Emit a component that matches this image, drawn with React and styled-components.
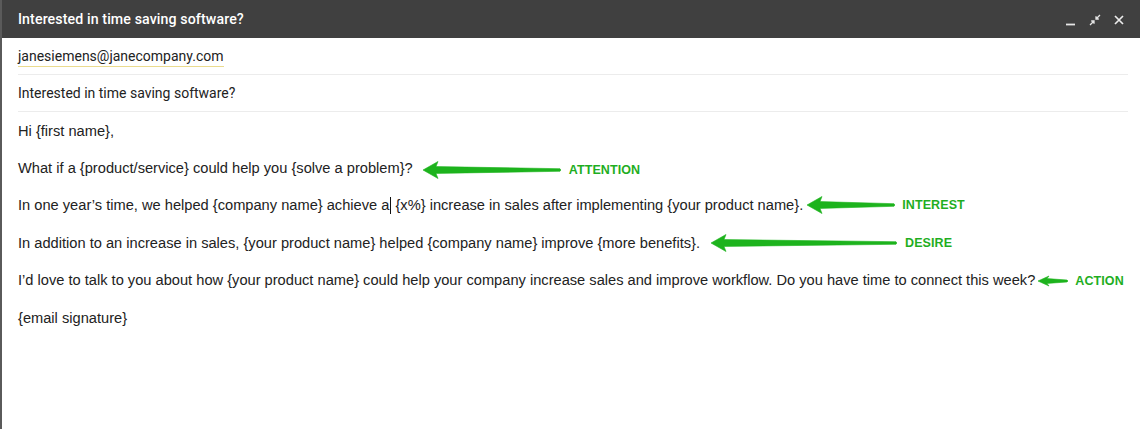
import React from "react";
import styled, { createGlobalStyle } from "styled-components";

const GlobalStyle = createGlobalStyle`
    html, body {
        margin: 0;
        padding: 0;
        background: #ffffff;
    }
    * {
        box-sizing: border-box;
    }
`;

const Window = styled.div`
    width: 1140px;
    height: 429px;
    display: flex;
    flex-direction: column;
    border-left: 2px solid #5a5a5a;
    background: #fff;
    overflow: hidden;
`;

const TitleBar = styled.div`
    height: 38px;
    background: #404040;
    display: flex;
    align-items: center;
    justify-content: space-between;
    margin-left: -2px;
    padding: 0 14px 0 18px;
`;

const TitleText = styled.div`
    color: #ffffff;
    font-family: Roboto, "Noto Sans", sans-serif;
    font-weight: 500;
    font-size: 14.2px;
    letter-spacing: 0.1px;
`;

const Controls = styled.div`
    display: flex;
    align-items: center;
    gap: 10px;
    margin-top: 2px;
`;

const ControlIcon = styled.svg`
    width: 14px;
    height: 14px;
    display: block;
`;

const Field = styled.div`
    margin: 0 12px 0 16px;
    height: 37px;
    display: flex;
    align-items: center;
    border-bottom: 1px solid #ececec;
    font-family: Roboto, "Noto Sans", sans-serif;
    font-size: 14px;
    color: #222;
`;

const Recipient = styled.span`
    border-bottom: 1px solid #eadb8e;
    line-height: 17px;
    padding-bottom: 1px;
    margin-top: 3px;
`;

const Body = styled.div`
    padding: 0 0 0 16px;
    display: flex;
    flex-direction: column;
    font-family: "Liberation Sans", Arial, sans-serif;
    font-size: 14.65px;
    color: #222;
`;

const Line = styled.div`
    height: 37.4px;
    display: flex;
    align-items: center;
    white-space: pre;
`;

const Cursor = styled.span`
    display: inline-block;
    width: 1px;
    height: 17px;
    background: #111;
    margin: 0 0 0 1px;
`;

const Annotation = styled.div`
    display: flex;
    align-items: center;
    margin-left: ${({ gap }) => gap}px;
    margin-top: ${({ shift }) => shift || 0}px;
`;

const Label = styled.span`
    color: #1fae1f;
    font-family: "Liberation Sans", Arial, sans-serif;
    font-weight: bold;
    font-size: 12.5px;
    margin-left: ${({ gap }) => gap}px;
    letter-spacing: 0.1px;
`;

const Arrow = ({ length }) => {
    const h = 18;
    const small = length < 50;
    const head = small ? 11 : 15;
    const half = small ? 5 : 8.5;
    const tail = small ? 2 : 2.6;
    const neck = small ? 2.4 : 3.4;
    const mid = h / 2;
    return (
        <svg width={length} height={h} viewBox={`0 0 ${length} ${h}`} style={{ display: "block" }}>
            <path
                d={`M0 ${mid} L${head} ${mid - half} L${head - 2} ${mid - neck} L${length - 1} ${mid - tail / 2} L${length} ${mid} L${length - 1} ${mid + tail / 2} L${head - 2} ${mid + neck} L${head} ${mid + half} Z`}
                fill="#1db31d"
                stroke="#1db31d"
                strokeWidth="0.6"
                strokeLinejoin="round"
            />
        </svg>
    );
};

const App = () => {
    return (
        <>
            <GlobalStyle />
            <Window>
                <TitleBar>
                    <TitleText>Interested in time saving software?</TitleText>
                    <Controls>
                        <ControlIcon viewBox="0 0 14 14">
                            <path d="M2 11.5 H11" stroke="#e6e6e6" strokeWidth="1.8" />
                        </ControlIcon>
                        <ControlIcon viewBox="0 0 14 14">
                            <path d="M12 2 L8 6 M8 3.2 V6 H10.8 M2 12 L6 8 M3.2 8 H6 V10.8" stroke="#e6e6e6" strokeWidth="1.3" fill="none" />
                        </ControlIcon>
                        <ControlIcon viewBox="0 0 14 14">
                            <path d="M3 3 L11 11 M11 3 L3 11" stroke="#ececec" strokeWidth="1.7" />
                        </ControlIcon>
                    </Controls>
                </TitleBar>
                <Field>
                    <Recipient>janesiemens@janecompany.com</Recipient>
                </Field>
                <Field>Interested in time saving software?</Field>
                <Body>
                    <Line>Hi {"{first name}"},</Line>
                    <Line>
                        {"What if a {product/service} could help you {solve a problem}?"}
                        <Annotation gap={10} shift={3}>
                            <Arrow length={138} />
                            <Label gap={8}>ATTENTION</Label>
                        </Annotation>
                    </Line>
                    <Line>
                        {"In one year’s time, we helped {company name} achieve a"}<Cursor />{" {x%} increase in sales after implementing {your product name}."}
                        <Annotation gap={4} shift={0}>
                            <Arrow length={88} />
                            <Label gap={7}>INTEREST</Label>
                        </Annotation>
                    </Line>
                    <Line>
                        {"In addition to an increase in sales, {your product name} helped {company name} improve {more benefits}."}
                        <Annotation gap={11} shift={0}>
                            <Arrow length={186} />
                            <Label gap={8}>DESIRE</Label>
                        </Annotation>
                    </Line>
                    <Line>
                        {"I’d love to talk to you about how {your product name} could help your company increase sales and improve workflow. Do you have time to connect this week?"}
                        <Annotation gap={3} shift={1}>
                            <Arrow length={30} />
                            <Label gap={7}>ACTION</Label>
                        </Annotation>
                    </Line>
                    <Line>{"{email signature}"}</Line>
                </Body>
            </Window>
        </>
    );
};

export default App;
